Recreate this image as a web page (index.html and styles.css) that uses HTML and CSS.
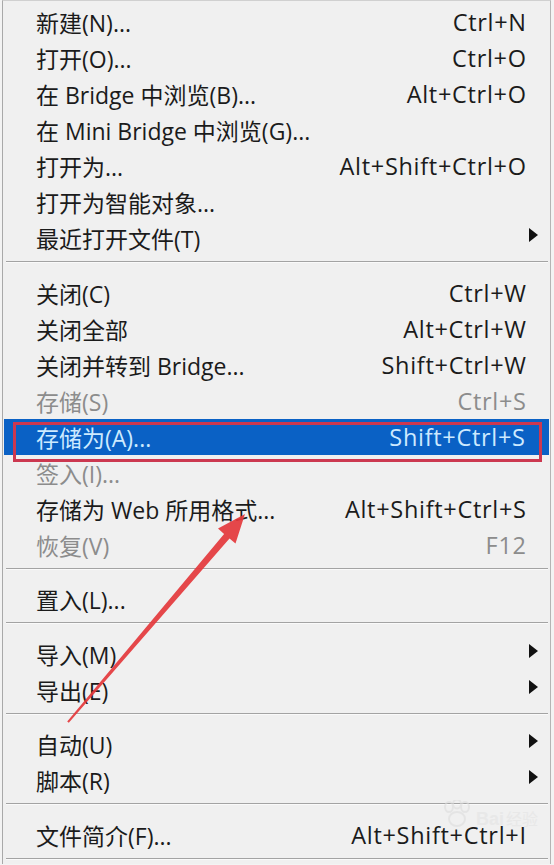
FILE: index.html
```html
<!DOCTYPE html>
<html lang="zh-CN">
<head>
<meta charset="utf-8">
<title>文件菜单</title>
<link rel="stylesheet" href="styles.css">
</head>
<body>
<div class="page">
  <div class="menu">
    <div class="item"><span class="label">新建(N)...</span><span class="key">Ctrl+N</span></div>
    <div class="item"><span class="label">打开(O)...</span><span class="key">Ctrl+O</span></div>
    <div class="item"><span class="label">在 Bridge 中浏览(B)...</span><span class="key">Alt+Ctrl+O</span></div>
    <div class="item"><span class="label">在 Mini Bridge 中浏览(G)...</span></div>
    <div class="item"><span class="label">打开为...</span><span class="key">Alt+Shift+Ctrl+O</span></div>
    <div class="item"><span class="label">打开为智能对象...</span></div>
    <div class="item"><span class="label">最近打开文件(T)</span><span class="sub"></span></div>
    <div class="sep"></div>
    <div class="item"><span class="label">关闭(C)</span><span class="key">Ctrl+W</span></div>
    <div class="item"><span class="label">关闭全部</span><span class="key">Alt+Ctrl+W</span></div>
    <div class="item"><span class="label">关闭并转到 Bridge...</span><span class="key">Shift+Ctrl+W</span></div>
    <div class="item disabled"><span class="label">存储(S)</span><span class="key">Ctrl+S</span></div>
    <div class="item active"><span class="label">存储为(A)...</span><span class="key">Shift+Ctrl+S</span><span class="mark"></span></div>
    <div class="item disabled"><span class="label">签入(I)...</span></div>
    <div class="item"><span class="label">存储为 Web 所用格式...</span><span class="key">Alt+Shift+Ctrl+S</span></div>
    <div class="item disabled"><span class="label">恢复(V)</span><span class="key">F12</span></div>
    <div class="sep"></div>
    <div class="item"><span class="label">置入(L)...</span></div>
    <div class="sep"></div>
    <div class="item"><span class="label">导入(M)</span><span class="sub"></span></div>
    <div class="item"><span class="label">导出(E)</span><span class="sub"></span></div>
    <div class="sep"></div>
    <div class="item"><span class="label">自动(U)</span><span class="sub"></span></div>
    <div class="item"><span class="label">脚本(R)</span><span class="sub"></span></div>
    <div class="sep"></div>
    <div class="item"><span class="label">文件简介(F)...</span><span class="key">Alt+Shift+Ctrl+I</span></div>
    <div class="sep"></div>
  </div>

  <div class="watermark">
    <svg class="paw" width="34" height="30" viewBox="0 0 34 30" aria-hidden="true">
      <ellipse cx="9" cy="7" rx="4" ry="5"/>
      <ellipse cx="17" cy="4" rx="4" ry="4.5"/>
      <ellipse cx="25" cy="7" rx="4" ry="5"/>
      <ellipse cx="17" cy="19" rx="8" ry="7"/>
    </svg>
    <span class="wm-text">Bai<span class="wm-cn">经验</span></span>
  </div>

  <svg class="annot-arrow" width="554" height="865" viewBox="0 0 554 865" aria-hidden="true">
    <polygon points="245,514 235.5,543.5 229.5,538.6 68.8,722.7 67.2,721.4 224.1,534 218,528.5"/>
  </svg>
</div>
</body>
</html>
```

FILE: styles.css
```css
html, body {
  margin: 0;
  padding: 0;
}

body {
  background: #f3f3f3;
  font-family: "Open Sans", "Noto Sans CJK SC", sans-serif;
}

.page {
  position: relative;
  width: 554px;
  height: 865px;
  overflow: hidden;
}

.menu {
  margin-left: 2px;
  width: 547px;
  background: #f0f0f0;
  border-left: 1px solid #a9a9a9;
  border-right: 1px solid #b4b4b4;
  border-top: 1px solid #d0d0d0;
  padding-top: 3px;
  min-height: 860px;
}

.item {
  position: relative;
  display: grid;
  grid-template-columns: 1fr auto 24px;
  align-items: center;
  height: 36px;
  padding-left: 33px;
  font-size: 23px;
  color: #1b1b1b;
  white-space: nowrap;
}

.label {
  grid-column: 1;
}

.key {
  grid-column: 2;
  font-size: 23.5px;
  letter-spacing: 0.7px;
  margin-right: -0.7px;
}

.sub {
  grid-column: 3;
  width: 0;
  height: 0;
  margin-left: 3px;
  margin-top: -6px;
  border-left: 9px solid #111;
  border-top: 7px solid transparent;
  border-bottom: 7px solid transparent;
}

.disabled {
  color: #8c8c8c;
}

.active {
  background: #0a61c5;
  color: #cdeaff;
  margin-left: 1px;
  margin-right: 1px;
  padding-left: 32px;
}

.mark {
  position: absolute;
  left: 9px;
  top: 3px;
  width: 529px;
  height: 40px;
  box-sizing: border-box;
  border: 3px solid #cc3850;
}

.sep {
  margin: 5px 2px 11.5px 3px;
  height: 0;
  border-top: 1px solid #a3a3a3;
  border-bottom: 1px solid #fafafa;
}

.watermark {
  position: absolute;
  left: 440px;
  top: 800px;
  display: flex;
  align-items: flex-end;
  gap: 2px;
  opacity: 0.55;
  pointer-events: none;
}

.paw {
  fill: none;
  stroke: #dcdcdc;
  stroke-width: 2;
}

.wm-text {
  font-family: "Liberation Sans", "Noto Sans CJK SC", sans-serif;
  font-size: 18px;
  font-weight: bold;
  color: #e2e2e2;
}

.wm-cn {
  font-weight: normal;
  font-size: 16px;
  margin-left: 2px;
}

.annot-arrow {
  position: absolute;
  left: 0;
  top: 0;
  pointer-events: none;
}

.annot-arrow polygon {
  fill: #e4383c;
  fill-opacity: 0.92;
}
```
